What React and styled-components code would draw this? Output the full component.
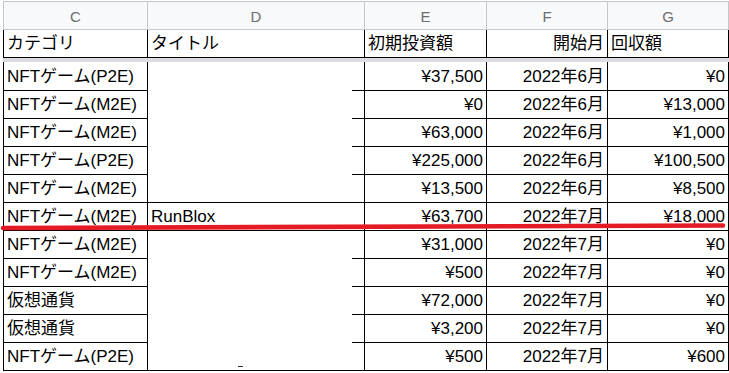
import React from "react"
import styled, { createGlobalStyle } from "styled-components"

const GlobalStyle = createGlobalStyle`
    html, body {
        margin: 0;
        padding: 0;
        background: #fff;
    }
    body {
        font-family: "Liberation Sans", "Noto Sans CJK JP", sans-serif;
    }
`

const columns = ['C', 'D', 'E', 'F', 'G']

const head = [
    { text: 'カテゴリ', align: 'left' },
    { text: 'タイトル', align: 'left' },
    { text: '初期投資額', align: 'left' },
    { text: '開始月', align: 'right' },
    { text: '回収額', align: 'left' },
]

const rows = [
    ['NFTゲーム(P2E)', '', '¥37,500', '2022年6月', '¥0'],
    ['NFTゲーム(M2E)', '', '¥0', '2022年6月', '¥13,000'],
    ['NFTゲーム(M2E)', '', '¥63,000', '2022年6月', '¥1,000'],
    ['NFTゲーム(P2E)', '', '¥225,000', '2022年6月', '¥100,500'],
    ['NFTゲーム(M2E)', '', '¥13,500', '2022年6月', '¥8,500'],
    ['NFTゲーム(M2E)', 'RunBlox', '¥63,700', '2022年7月', '¥18,000'],
    ['NFTゲーム(M2E)', '', '¥31,000', '2022年7月', '¥0'],
    ['NFTゲーム(M2E)', '', '¥500', '2022年7月', '¥0'],
    ['仮想通貨', '', '¥72,000', '2022年7月', '¥0'],
    ['仮想通貨', '', '¥3,200', '2022年7月', '¥0'],
    ['NFTゲーム(P2E)', '', '¥500', '2022年7月', '¥600'],
]

// text columns left, amounts and dates right
const dataAlign = ['left', 'left', 'right', 'right', 'right']

// titles were blanked out; their row lines only show near the right edge
const blanked = [0, 1, 2, 3, 6, 7, 8, 9]

const App = () => {
    return (
        <Page>
            <GlobalStyle />
            <Sheet>
                <LetterRow>
                    {columns.map(c => <LetterCell key={c}>{c}</LetterCell>)}
                </LetterRow>
                <Row>
                    {head.map(h => <Cell key={h.text} align={h.align}>{h.text}</Cell>)}
                </Row>
                <FreezeBar />
                {rows.map((r, i) => (
                    <Row key={i} first={i === 0}>
                        {r.map((v, j) => (
                            <Cell
                                key={j}
                                align={dataAlign[j]}
                                blank={j === 1 && blanked.includes(i)}
                            >
                                {v}
                                {j === 1 && i === rows.length - 1 && <Stray />}
                            </Cell>
                        ))}
                    </Row>
                ))}

                <Marker viewBox="0 0 729 14" width="729" height="14">
                    <line x1="3" y1="8" x2="723" y2="5.5" stroke="#e41b24" strokeWidth="4.6" strokeLinecap="round" />
                </Marker>
            </Sheet>
        </Page>
    )
}

export default App

const Page = styled.div`
    width: 729px;
    height: 373px;
    overflow: hidden;
    background: #fff;
`
const Sheet = styled.div`
    position: relative;
    padding: 1px 0 0 3px;
`
const Grid = styled.div`
    display: grid;
    grid-template-columns: 144px 217px 122px 121px 121px;
    border-left: 1px solid #000;
`
const LetterRow = styled(Grid)`
    height: 29px;
    box-sizing: border-box;
    border-top: 1px solid #c7c7c7;
    border-left-color: #c7c7c7;
    background: #f8f9fa;
`
const LetterCell = styled.div`
    box-sizing: border-box;
    border-right: 1px solid #c7c7c7;
    border-bottom: 1px solid #c7c7c7;
    display: flex;
    align-items: center;
    justify-content: center;
    padding-top: 1px;
    font-family: "Liberation Sans", Arial, sans-serif;
    font-size: 15px;
    color: #6e6e6e;
`
const Row = styled(Grid)`
    height: ${p => (p.first ? 29 : 28)}px;
`
const Cell = styled.div`
    box-sizing: border-box;
    border-right: 1px solid #000;
    border-bottom: 1px solid ${p => (p.blank ? 'transparent' : '#000')};
    background: ${p => (p.blank ? 'linear-gradient(#000, #000) no-repeat right bottom / 13px 1px border-box' : 'none')};
    display: flex;
    align-items: flex-end;
    justify-content: ${p => (p.align === 'right' ? 'flex-end' : 'flex-start')};
    padding: 0 3px 3px;
    font-size: 17px;
    line-height: 20px;
    color: #000;
    white-space: nowrap;
    overflow: hidden;
`
const FreezeBar = styled.div`
    height: 4px;
    background: #dadce0;
`
const Stray = styled.span`
    width: 5px;
    height: 1.5px;
    margin-left: 87px;
    background: #3a2a1a;
`
const Marker = styled.svg`
    position: absolute;
    left: 0;
    top: 220px;
    pointer-events: none;
`
